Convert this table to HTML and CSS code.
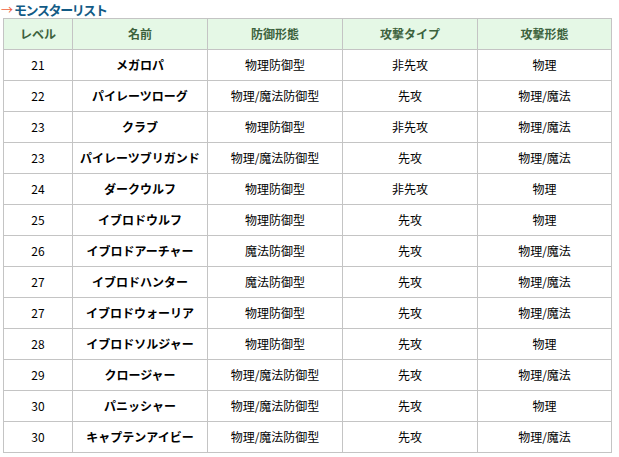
FILE: index.html
```html
<!DOCTYPE html>
<html lang="ja">
<head>
<meta charset="utf-8">
<link rel="stylesheet" href="styles.css">
</head>
<body>
<div class="page">
  <h2 class="title"><span class="arrow">→</span>モンスターリスト</h2>
  <table class="list">
    <colgroup>
      <col class="c-lv"><col class="c-name"><col class="c-def"><col class="c-atk"><col class="c-form">
    </colgroup>
    <thead>
      <tr><th>レベル</th><th>名前</th><th>防御形態</th><th>攻撃タイプ</th><th>攻撃形態</th></tr>
    </thead>
    <tbody>
      <tr><td>21</td><td class="name">メガロパ</td><td>物理防御型</td><td>非先攻</td><td>物理</td></tr>
      <tr><td>22</td><td class="name">パイレーツローグ</td><td>物理/魔法防御型</td><td>先攻</td><td>物理/魔法</td></tr>
      <tr><td>23</td><td class="name">クラブ</td><td>物理防御型</td><td>非先攻</td><td>物理/魔法</td></tr>
      <tr><td>23</td><td class="name">パイレーツブリガンド</td><td>物理/魔法防御型</td><td>先攻</td><td>物理/魔法</td></tr>
      <tr><td>24</td><td class="name">ダークウルフ</td><td>物理防御型</td><td>非先攻</td><td>物理</td></tr>
      <tr><td>25</td><td class="name">イブロドウルフ</td><td>物理防御型</td><td>先攻</td><td>物理</td></tr>
      <tr><td>26</td><td class="name">イブロドアーチャー</td><td>魔法防御型</td><td>先攻</td><td>物理/魔法</td></tr>
      <tr><td>27</td><td class="name">イブロドハンター</td><td>魔法防御型</td><td>先攻</td><td>物理/魔法</td></tr>
      <tr><td>27</td><td class="name">イブロドウォーリア</td><td>物理防御型</td><td>先攻</td><td>物理/魔法</td></tr>
      <tr><td>28</td><td class="name">イブロドソルジャー</td><td>物理防御型</td><td>先攻</td><td>物理</td></tr>
      <tr><td>29</td><td class="name">クロージャー</td><td>物理/魔法防御型</td><td>先攻</td><td>物理/魔法</td></tr>
      <tr><td>30</td><td class="name">パニッシャー</td><td>物理/魔法防御型</td><td>先攻</td><td>物理</td></tr>
      <tr><td>30</td><td class="name">キャプテンアイビー</td><td>物理/魔法防御型</td><td>先攻</td><td>物理/魔法</td></tr>
    </tbody>
  </table>
</div>
</body>
</html>
```

FILE: styles.css
```css
html, body {
  margin: 0;
  padding: 0;
  background: #ffffff;
}
.page {
  padding: 0 0 0 3px;
  font-family: "Noto Sans CJK JP", "Noto Sans", sans-serif;
  font-size: 12px;
  color: #000;
}
.title {
  margin: 0 0 0 -3px;
  padding: 1px 0 0 1px;
  height: 17px;
  line-height: 17px;
  font-size: 13px;
  font-weight: bold;
  color: #115a85;
  letter-spacing: -1.4px;
  white-space: nowrap;
}
.arrow {
  color: #f0603c;
  font-weight: normal;
  font-size: 12px;
  letter-spacing: 0;
  margin-right: 1px;
}
.list {
  border-collapse: collapse;
  width: 609px;
  table-layout: fixed;
  border: 1px solid #c4c4c4;
}
.c-lv { width: 69px; }
.c-name { width: 135px; }
.c-def { width: 135px; }
.c-atk { width: 135px; }
.c-form { width: 134px; }
.list th, .list td {
  border: 1px solid #c4c4c4;
  text-align: center;
  padding: 0;
  height: 30px;
  line-height: 14px;
}
.list th {
  background: #e5f8e6;
  color: #3c623d;
  font-weight: bold;
  font-size: 12px;
}
.list td.name {
  font-weight: bold;
}
```
